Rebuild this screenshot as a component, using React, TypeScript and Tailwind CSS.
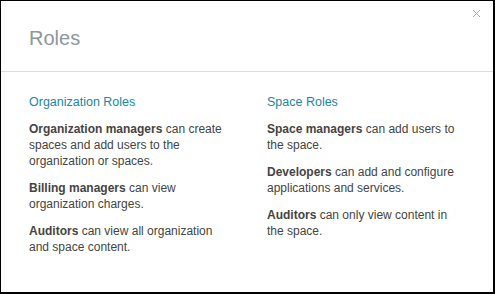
import { X } from 'lucide-react'

type Role = { name: string; text: string }

const orgRoles: Role[] = [
  { name: 'Organization managers', text: 'can create spaces and add users to the organization or spaces.' },
  { name: 'Billing managers', text: 'can view organization charges.' },
  { name: 'Auditors', text: 'can view all organization and space content.' },
]

const spaceRoles: Role[] = [
  { name: 'Space managers', text: 'can add users to the space.' },
  { name: 'Developers', text: 'can add and configure applications and services.' },
  { name: 'Auditors', text: 'can only view content in the space.' },
]

function RoleColumn({ title, roles, width, textWidth }: { title: string; roles: Role[]; width: string; textWidth: string }) {
  return (
    <div className={width}>
      <h3 className="text-[12.5px] leading-4 text-[#1a87a5]">{title}</h3>
      <div className={`mt-[11px] space-y-[11px] ${textWidth}`}>
        {roles.map((r) => (
          <p key={r.name} className="text-[12px] leading-4 text-[#444]">
            <span className="font-bold">{r.name}</span> {r.text}
          </p>
        ))}
      </div>
    </div>
  )
}

export default function App() {
  return (
    <div className="h-[294px] w-[495px] bg-black pl-px pt-px pr-[2px] pb-[2px] font-['Liberation_Sans',Arial,sans-serif]">
      <div className="relative h-full w-full bg-white">
        <button type="button" className="absolute right-[10px] top-[6px] text-[#a3a9ad]">
          <X size={13} strokeWidth={1.75} />
        </button>
        <div className="h-[71px] border-b border-[#dcdcdc] pl-[28px] pt-[25px]">
          <h2 className="text-[20px] leading-6 text-[#8e979d]">Roles</h2>
        </div>
        <div className="flex pl-[28px] pt-[22px]">
          <RoleColumn title="Organization Roles" roles={orgRoles} width="w-[238px]" textWidth="w-[200px]" />
          <RoleColumn title="Space Roles" roles={spaceRoles} width="w-[200px]" textWidth="w-[193px]" />
        </div>
      </div>
    </div>
  )
}
